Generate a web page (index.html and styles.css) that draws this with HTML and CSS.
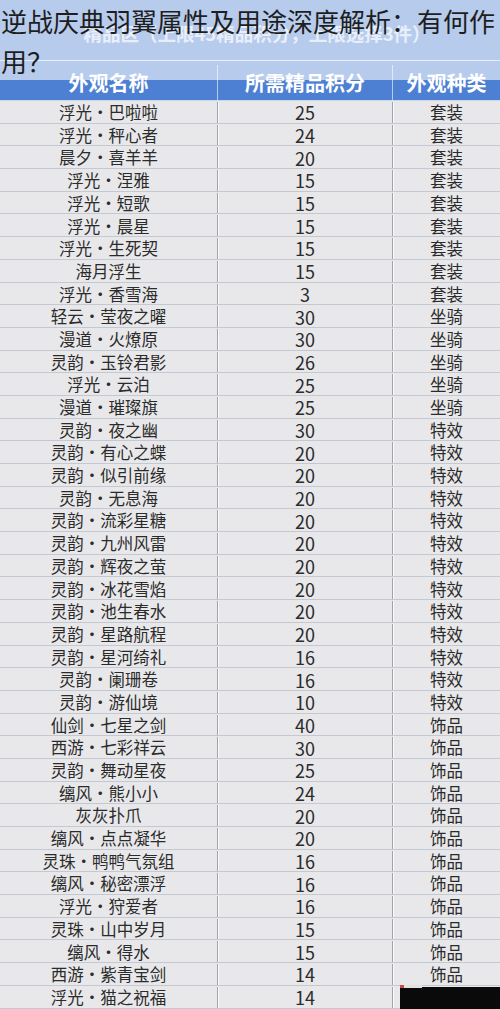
FILE: index.html
```html
<!DOCTYPE html>
<html lang="zh-CN">
<head>
<meta charset="utf-8">
<title>逆战庆典羽翼属性及用途深度解析</title>
<link rel="stylesheet" href="styles.css">
</head>
<body>
<div class="page">
  <div class="sheet">
    <div class="banner"><span class="banner-text">精品区（上限45精品积分，上限选择3件）</span></div>
    <div class="row head">
      <div class="c c1">外观名称</div>
      <div class="c c2">所需精品积分</div>
      <div class="c c3">外观种类</div>
    </div>
    <div class="row"><div class="c c1">浮光・巴啦啦</div><div class="c c2">25</div><div class="c c3">套装</div></div>
    <div class="row"><div class="c c1">浮光・秤心者</div><div class="c c2">24</div><div class="c c3">套装</div></div>
    <div class="row"><div class="c c1">晨夕・喜羊羊</div><div class="c c2">20</div><div class="c c3">套装</div></div>
    <div class="row"><div class="c c1">浮光・涅雅</div><div class="c c2">15</div><div class="c c3">套装</div></div>
    <div class="row"><div class="c c1">浮光・短歌</div><div class="c c2">15</div><div class="c c3">套装</div></div>
    <div class="row"><div class="c c1">浮光・晨星</div><div class="c c2">15</div><div class="c c3">套装</div></div>
    <div class="row"><div class="c c1">浮光・生死契</div><div class="c c2">15</div><div class="c c3">套装</div></div>
    <div class="row"><div class="c c1">海月浮生</div><div class="c c2">15</div><div class="c c3">套装</div></div>
    <div class="row"><div class="c c1">浮光・香雪海</div><div class="c c2">3</div><div class="c c3">套装</div></div>
    <div class="row"><div class="c c1">轻云・莹夜之曜</div><div class="c c2">30</div><div class="c c3">坐骑</div></div>
    <div class="row"><div class="c c1">漫道・火燎原</div><div class="c c2">30</div><div class="c c3">坐骑</div></div>
    <div class="row"><div class="c c1">灵韵・玉铃君影</div><div class="c c2">26</div><div class="c c3">坐骑</div></div>
    <div class="row"><div class="c c1">浮光・云泊</div><div class="c c2">25</div><div class="c c3">坐骑</div></div>
    <div class="row"><div class="c c1">漫道・璀璨旗</div><div class="c c2">25</div><div class="c c3">坐骑</div></div>
    <div class="row"><div class="c c1">灵韵・夜之幽</div><div class="c c2">30</div><div class="c c3">特效</div></div>
    <div class="row"><div class="c c1">灵韵・有心之蝶</div><div class="c c2">20</div><div class="c c3">特效</div></div>
    <div class="row"><div class="c c1">灵韵・似引前缘</div><div class="c c2">20</div><div class="c c3">特效</div></div>
    <div class="row"><div class="c c1">灵韵・无息海</div><div class="c c2">20</div><div class="c c3">特效</div></div>
    <div class="row"><div class="c c1">灵韵・流彩星糖</div><div class="c c2">20</div><div class="c c3">特效</div></div>
    <div class="row"><div class="c c1">灵韵・九州风雷</div><div class="c c2">20</div><div class="c c3">特效</div></div>
    <div class="row"><div class="c c1">灵韵・辉夜之萤</div><div class="c c2">20</div><div class="c c3">特效</div></div>
    <div class="row"><div class="c c1">灵韵・冰花雪焰</div><div class="c c2">20</div><div class="c c3">特效</div></div>
    <div class="row"><div class="c c1">灵韵・池生春水</div><div class="c c2">20</div><div class="c c3">特效</div></div>
    <div class="row"><div class="c c1">灵韵・星路航程</div><div class="c c2">20</div><div class="c c3">特效</div></div>
    <div class="row"><div class="c c1">灵韵・星河绮礼</div><div class="c c2">16</div><div class="c c3">特效</div></div>
    <div class="row"><div class="c c1">灵韵・阑珊卷</div><div class="c c2">16</div><div class="c c3">特效</div></div>
    <div class="row"><div class="c c1">灵韵・游仙境</div><div class="c c2">10</div><div class="c c3">特效</div></div>
    <div class="row"><div class="c c1">仙剑・七星之剑</div><div class="c c2">40</div><div class="c c3">饰品</div></div>
    <div class="row"><div class="c c1">西游・七彩祥云</div><div class="c c2">30</div><div class="c c3">饰品</div></div>
    <div class="row"><div class="c c1">灵韵・舞动星夜</div><div class="c c2">25</div><div class="c c3">饰品</div></div>
    <div class="row"><div class="c c1">缡风・熊小小</div><div class="c c2">24</div><div class="c c3">饰品</div></div>
    <div class="row"><div class="c c1">灰灰扑爪</div><div class="c c2">20</div><div class="c c3">饰品</div></div>
    <div class="row"><div class="c c1">缡风・点点凝华</div><div class="c c2">20</div><div class="c c3">饰品</div></div>
    <div class="row"><div class="c c1">灵珠・鸭鸭气氛组</div><div class="c c2">16</div><div class="c c3">饰品</div></div>
    <div class="row"><div class="c c1">缡风・秘密漂浮</div><div class="c c2">16</div><div class="c c3">饰品</div></div>
    <div class="row"><div class="c c1">浮光・狩爱者</div><div class="c c2">16</div><div class="c c3">饰品</div></div>
    <div class="row"><div class="c c1">灵珠・山中岁月</div><div class="c c2">15</div><div class="c c3">饰品</div></div>
    <div class="row"><div class="c c1">缡风・得水</div><div class="c c2">15</div><div class="c c3">饰品</div></div>
    <div class="row"><div class="c c1">西游・紫青宝剑</div><div class="c c2">14</div><div class="c c3">饰品</div></div>
    <div class="row"><div class="c c1">浮光・猫之祝福</div><div class="c c2">14</div><div class="c c3">饰品</div></div>
  </div>
  <div class="wash"></div>
  <h1 class="title">逆战庆典羽翼属性及用途深度解析：有何作用？</h1>
  <div class="mask">
    <svg class="mask-fill" width="100" height="22" viewBox="0 0 100 22"><rect x="0" y="0" width="100" height="22" fill="#0a0a0a"/></svg>
    <span class="mask-logo"></span>
  </div>
</div>
</body>
</html>
```
FILE: styles.css
```css
* { box-sizing: border-box; }
html, body { margin: 0; padding: 0; background: #e8e8ea; }
body { font-family: "Noto Sans CJK SC", "Noto Sans", sans-serif; }

.page {
  position: relative;
  width: 500px;
  height: 1009px;
  overflow: hidden;
}

.sheet {
  display: flex;
  flex-direction: column;
  width: 500px;
}

.banner {
  height: 61px;
  flex: none;
  background: #4d80d2;
  border-bottom: 1px solid #c9d8f1;
  display: flex;
  align-items: flex-end;
  justify-content: center;
  padding-bottom: 17px;
  padding-left: 14px;
}
.banner-text {
  color: #c8d8f2;
  font-size: 18.5px;
  font-weight: 700;
  line-height: 20px;
  white-space: nowrap;
}

.row {
  display: grid;
  flex: none;
  grid-template-columns: 218px 175px 1fr;
  height: 22.7px;
  background: #e8e8ea;
  border-bottom: 1px solid #c3c8d2;
  box-shadow: 0 1px 0 #f6f6f8;
  color: #2b2b2b;
  padding-top: 1px;
}
.row.head {
  height: 40px;
  background: #4d80d2;
  border-bottom: 1px solid #c9d6ee;
  box-shadow: none;
  color: #ffffff;
  font-weight: 700;
  padding-top: 4px;
}

.c {
  display: flex;
  align-items: center;
  justify-content: center;
  white-space: nowrap;
  font-size: 16.5px;
  line-height: 1;
}
.row.head .c { font-size: 20px; }

.c1, .c2 {
  border-right: 1px solid #9ea4ae;
  box-shadow: 1px 0 0 #fafafc;
}
.row.head .c1, .row.head .c2 {
  border-right: 1px solid #b8cbeb;
  box-shadow: none;
}
.c2 { font-size: 18px; }
.row.head .c2 { font-size: 20px; }

.wash {
  position: absolute;
  left: 0;
  top: 0;
  width: 500px;
  height: 80px;
  background: rgba(255, 255, 255, 0.6);
}

.title {
  position: absolute;
  left: 1px;
  top: 1px;
  margin: 0;
  width: 500px;
  font-size: 26px;
  line-height: 40px;
  font-weight: 400;
  color: #1e1e1e;
}

.mask {
  position: absolute;
  z-index: 5;
  left: 400px;
  top: 987px;
  width: 100px;
  height: 22px;
  background-color: #0a0a0a;
}
.mask-fill {
  display: block;
}
.mask-logo {
  position: absolute;
  left: 0;
  top: -2px;
  width: 22px;
  height: 3px;
  background: linear-gradient(90deg, #d04848 0 4px, #e8e0e0 4px 22px);
}
```
